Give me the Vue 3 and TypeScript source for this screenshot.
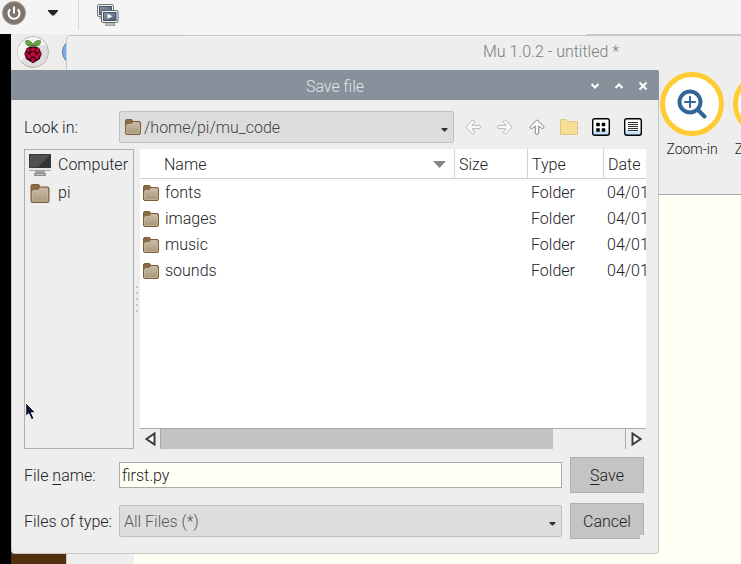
<script setup lang="ts">
import { ref } from 'vue'

interface Entry {
  name: string
  type: string
  date: string
}

const entries: Entry[] = [
  { name: 'fonts', type: 'Folder', date: '04/01' },
  { name: 'images', type: 'Folder', date: '04/01' },
  { name: 'music', type: 'Folder', date: '04/01' },
  { name: 'sounds', type: 'Folder', date: '04/01' },
]

// Drupelets of the raspberry logo: centre x, centre y, radius
const drupelets: [number, number, number][] = [
  [12, 10.6, 2.4], [7, 11.6, 2.3], [17, 11.6, 2.3],
  [4.6, 16, 1.9], [19.4, 16, 1.9], [12, 16.2, 2.8],
  [7.4, 19, 2.5], [16.6, 19, 2.5], [12, 23, 2.3],
]

const fileName = ref('first.py')
const lookIn = ref('/home/pi/mu_code')
const fileType = ref('All Files (*)')
</script>

<template>
  <div class="viewer">
    <svg class="defs" width="0" height="0" aria-hidden="true">
      <defs>
        <linearGradient id="tan" x1="0" y1="0" x2="0" y2="1">
          <stop offset="0" stop-color="#c9bda9" />
          <stop offset="1" stop-color="#a99878" />
        </linearGradient>
        <linearGradient id="glow" x1="0" y1="0" x2="0" y2="1">
          <stop offset="0.55" stop-color="#ffffff" />
          <stop offset="1" stop-color="#a9d2fb" />
        </linearGradient>
        <linearGradient id="screen" x1="0" y1="0" x2="1" y2="1">
          <stop offset="0" stop-color="#8b9bb0" />
          <stop offset="1" stop-color="#4d5d70" />
        </linearGradient>
        <symbol id="folder" viewBox="0 0 16 16">
          <path d="M.5 14V1.9Q.5.5 1.9.5h4.3Q7.500.5 7.500 2.500H14Q15.500 2.500 15.500 4v10Q15.500 15.500 14 15.500H2Q.5 15.500.5 14z" fill="#8a6c47" stroke="#7d5e34" />
          <path d="M1.500 14V7Q1.500 5.500 3 5.500h3.500L8 3.500h5.500q1 0 1 1V14q0 .5-.5.5H2q-.5 0-.5-.5z" fill="url(#tan)" stroke="#d0c4b0" stroke-width=".7" />
        </symbol>
        <symbol id="arrow" viewBox="0 0 16 16">
          <path d="M.8 8 7 1.500q1.500-1 2.500.3.500 1-.5 2L7 6.300h7q1.500.2 1.500 1.700T14 9.700H7l2 2.500q1 1 .5 2-1 1.300-2.500.3z" fill="#fafafa" stroke="currentColor" />
        </symbol>
        <symbol id="caret" viewBox="0 0 7 5">
          <path d="M.5 1h6v1L4 4.500H3L.5 2z" fill="#303236" />
        </symbol>
      </defs>
    </svg>

    <header class="viewer-bar">
      <button class="power" aria-label="Power">
        <svg width="24" height="24" viewBox="0 0 24 24">
          <circle cx="12" cy="12" r="11.500" fill="#7d756d" stroke="#a49e98" />
          <path d="M8.300 8.200a5.500 5.500 0 1 0 7.400 0M12 5.500v7" fill="none" stroke="#fff" stroke-width="2" />
        </svg>
      </button>
      <button class="more" aria-label="More">
        <svg width="10" height="6" viewBox="0 0 10 6"><path d="M0 0h10v1L6 5.500H4L0 1z" fill="#242424" /></svg>
      </button>
      <button class="screens" aria-label="Screens">
        <svg width="22" height="22" viewBox="0 0 22 22">
          <rect x=".5" y=".5" width="16" height="12" rx="1.500" fill="#f2f2f0" stroke="#777874" />
          <rect x="2.500" y="2.500" width="12" height="8" fill="url(#screen)" stroke="#45526a" />
          <path d="M3 12.500h3v2H2z" fill="#aaa" />
          <path d="M9 18h8l1 3.500H8.500z" fill="#bbb" stroke="#888" stroke-width=".7" />
          <rect x="4.500" y="6.500" width="16.500" height="12" rx="1.500" fill="#f5f5f3" stroke="#666762" />
          <rect x="6.500" y="8.500" width="12.500" height="8" fill="url(#screen)" stroke="#45526a" />
          <path d="M10.500 9.800v5l5-2.500z" fill="#fff" />
        </svg>
      </button>
    </header>

    <main class="desktop">
      <nav class="panel">
        <div class="launchers">
          <button class="launcher" aria-label="Menu">
            <svg width="34" height="34" viewBox="0 0 34 34">
              <circle cx="17" cy="17" r="15.500" fill="#dedede" stroke="#b4b4b4" />
              <path d="M1.500 17a15.500 15.500 0 0 1 29-7C20 8 12 18 5 26.500A15 15 0 0 1 1.500 17z" fill="#f5f5f5" />
              <g transform="translate(6.500 5) scale(.875)">
                <path d="M5 9Q12 5.500 19 9l3 7-2.500 6L12 26.500 4.500 22 2 16z" fill="#25000c" />
                <path d="M11.500 7Q3 7.500 3.500 1q3-1 5.500.5Q12 3 11.500 7zM12.500 7Q21 7.500 20.500 1q-3-1-5.500.5Q12 3 12.500 7z" fill="#75b346" stroke="#345e1e" stroke-width=".8" />
                <path d="m6 3 4.500 3.500M18 3l-4.500 3.500" stroke="#345e1e" stroke-width=".7" fill="none" />
                <circle v-for="(d, i) in drupelets" :key="i" :cx="d[0]" :cy="d[1]" :r="d[2]" fill="#c7053d" />
              </g>
            </svg>
          </button>
          <button class="launcher" aria-label="Web browser">
            <svg width="32" height="32" viewBox="0 0 32 32">
              <circle cx="16" cy="16" r="12.500" fill="#78aef0" stroke="#56779f" />
            </svg>
          </button>
        </div>
        <div class="tasks"></div>
      </nav>

      <section class="mu">
        <h1 class="mu-title">Mu 1.0.2 - untitled *</h1>
        <div class="mu-tools">
          <button class="tool">
            <span class="disc">
              <svg width="30" height="30" viewBox="0 0 30 30" fill="none" stroke="#336699" stroke-linecap="round">
                <circle cx="13" cy="13" r="10.500" stroke-width="4" />
                <path d="m21.500 21.500 6 6" stroke-width="4" />
                <path d="M8 13h10M13 8v10" stroke-width="2" />
              </svg>
            </span>
            Zoom-in
          </button>
          <button class="tool">
            <span class="disc"></span>
            Zoom-out
          </button>
        </div>
        <div class="editor"></div>
      </section>

      <form class="dialog" @submit.prevent>
        <header class="titlebar">
          <h2>Save file</h2>
          <div class="controls">
            <button type="button" aria-label="Minimise">
              <svg width="10" height="10" viewBox="0 0 10 10"><path d="m1.500 3 3.500 3.500L8.500 3" /></svg>
            </button>
            <button type="button" aria-label="Maximise">
              <svg width="10" height="10" viewBox="0 0 10 10"><path d="m1.500 7 3.500-3.500L8.500 7" /></svg>
            </button>
            <button type="button" aria-label="Close">
              <svg width="10" height="10" viewBox="0 0 10 10"><path d="m1.500 1.500 7 7M8.500 1.500l-7 7" /></svg>
            </button>
          </div>
        </header>

        <div class="content">
          <div class="look">
            <label for="look-in">Look in:</label>
            <div class="combo with-icon">
              <svg class="combo-icon" width="16" height="16"><use href="#folder" /></svg>
              <select id="look-in" v-model="lookIn"><option>/home/pi/mu_code</option></select>
              <svg class="combo-caret" width="7" height="5"><use href="#caret" /></svg>
            </div>
            <div class="nav">
              <button type="button" aria-label="Back" class="dim"><svg width="16" height="16"><use href="#arrow" /></svg></button>
              <button type="button" aria-label="Forward" class="dim right"><svg width="16" height="16"><use href="#arrow" /></svg></button>
              <button type="button" aria-label="Parent directory" class="up"><svg width="16" height="16"><use href="#arrow" /></svg></button>
              <button type="button" aria-label="Create new folder">
                <svg width="18" height="16" viewBox="0 0 18 16">
                  <path d="M.5 15.500V.5h6l2 2h9v13z" fill="#f6de93" stroke="#dfc68a" />
                </svg>
              </button>
              <button type="button" aria-label="List view">
                <svg width="18" height="18" viewBox="0 0 18 18">
                  <rect x=".7" y=".7" width="16.600" height="16.600" rx="2" fill="url(#glow)" stroke="#000" stroke-width="1.400" />
                  <path d="M4.500 5h3v3h-3zM10 5h3v3h-3zM4.500 10.500h3v3h-3zM10 10.500h3v3h-3z" fill="#000" stroke="#000" stroke-width=".5" />
                </svg>
              </button>
              <button type="button" aria-label="Detail view">
                <svg width="18" height="18" viewBox="0 0 18 18">
                  <rect x=".7" y=".7" width="16.600" height="16.600" rx="2" fill="url(#glow)" stroke="#000" stroke-width="1.400" />
                  <path d="M4 4.500h10M4 6.500h10M4 8.500h10M4 10.500h10M4 12.500h10" stroke="#333" />
                </svg>
              </button>
            </div>
          </div>

          <div class="browser">
            <ul class="places">
              <li>
                <svg width="22" height="22" viewBox="0 0 22 22">
                  <path d="M0 0h22v17H0z" fill="#e6e6e6" />
                  <path d="M0 0h22v14H0z" fill="#4f4f4f" />
                  <path d="M22 0v14H8z" fill="#343434" />
                  <path d="M.5.5h21v13H.5z" fill="none" stroke="#393939" />
                  <path d="M0 16.500h22" stroke="#aaa" />
                  <path d="M7 17h8v2H7zM5.500 19.500h11v2h-11z" fill="#c7c7c7" stroke="#888" />
                </svg>
                Computer
              </li>
              <li>
                <svg class="big" width="20" height="19"><use href="#folder" width="20" height="19" /></svg>
                pi
              </li>
            </ul>
            <div class="splitter"><i v-for="n in 5" :key="n"></i></div>
            <div class="listing">
              <div class="table-clip">
                <table>
                  <thead>
                    <tr>
                      <th class="name">
                        <div class="sort">Name
                          <svg width="13" height="7" viewBox="0 0 13 7"><path d="M0 0h13L6.500 7z" fill="#868686" /></svg>
                        </div>
                      </th>
                      <th class="size">Size</th>
                      <th class="type">Type</th>
                      <th class="date">Date</th>
                    </tr>
                  </thead>
                  <tbody>
                    <tr v-for="e in entries" :key="e.name">
                      <td>
                        <div class="file"><svg width="16" height="16"><use href="#folder" /></svg>{{ e.name }}</div>
                      </td>
                      <td></td>
                      <td>{{ e.type }}</td>
                      <td>{{ e.date }}</td>
                    </tr>
                  </tbody>
                </table>
              </div>
              <div class="scroll">
                <button type="button" aria-label="Scroll left">
                  <svg width="11" height="14" viewBox="0 0 11 14"><path d="M9.500 1.500v11L1.500 7z" /></svg>
                </button>
                <div class="track"><div class="thumb"></div></div>
                <button type="button" aria-label="Scroll right">
                  <svg width="11" height="14" viewBox="0 0 11 14"><path d="M1.500 1.500v11l8-5.500z" /></svg>
                </button>
              </div>
            </div>
          </div>

          <div class="fields">
            <label for="file-name">File <u>n</u>ame:</label>
            <input id="file-name" v-model="fileName" type="text" />
            <button class="action" type="submit"><u>S</u>ave</button>
            <label for="file-type">Files of type:</label>
            <div class="combo">
              <select id="file-type" v-model="fileType"><option>All Files (*)</option></select>
              <svg class="combo-caret" width="7" height="5"><use href="#caret" /></svg>
            </div>
            <button class="action notched" type="button">Cancel</button>
          </div>
        </div>
      </form>

      <svg class="pointer" width="13" height="19" viewBox="0 0 13 19" aria-hidden="true">
        <path d="M.7.7v13.800l3-2.800 2.800 6 2.600-1.200-2.700-5.700h4.300z" fill="#0d1030" stroke="#fff" />
      </svg>
    </main>
  </div>
</template>

<style>
body {
  margin: 0;
  overflow: hidden;
}
</style>

<style scoped>
.viewer {
  display: flex;
  flex-direction: column;
  height: 100vh;
  background: #000;
  color: #202225;
  font: 300 16px/20px Roboto, sans-serif;
}
.viewer * {
  box-sizing: border-box;
}
.defs {
  position: absolute;
}
svg {
  display: block;
  flex: none;
}
button {
  display: flex;
  align-items: center;
  justify-content: center;
  margin: 0;
  padding: 0;
  border: 0;
  background: none;
  color: inherit;
  font: inherit;
}
h1,
h2 {
  margin: 0;
  font: inherit;
}
u {
  text-decoration-thickness: 1px;
  text-underline-offset: 3px;
}
.viewer-bar {
  display: flex;
  flex: none;
  height: 34px;
  padding: 0 2px 8px;
  background: #f5f5f5;
}
.more {
  width: 53px;
  margin-right: -1px;
}
.screens {
  height: 30px;
  padding-left: 18px;
  border-left: 1px solid #d8d8d8;
}
.desktop {
  position: relative;
  flex: 1;
  margin-left: 11px;
  overflow: hidden;
  background: #52300f;
}
.panel {
  display: flex;
  justify-content: space-between;
  height: 36px;
  background: #f5f5f5;
}
.launchers {
  display: flex;
  align-items: center;
  gap: 9px;
  width: 173px;
  padding-left: 5px;
  background: #edecea;
}
.tasks {
  width: 155px;
  background: #c8c8c8;
}
.mu {
  display: flex;
  position: absolute;
  top: 1px;
  bottom: -1px;
  left: 55px;
  flex-direction: column;
  width: 970px;
  border: 1px solid #c8c8c8;
  border-radius: 4px 0 0;
  background: #eee;
}
.mu-title {
  height: 32px;
  color: #7b7d80;
  line-height: 32px;
  text-align: center;
}
.mu-tools {
  display: flex;
  gap: 9px;
  height: 127px;
  padding: 4px 0 0 593px;
  border-bottom: 1px solid #aaa;
}
.tool {
  flex-direction: column;
  flex: none;
  justify-content: flex-start;
  gap: 3px;
  width: 64px;
  font-size: 14px;
}
.disc {
  display: flex;
  align-items: center;
  justify-content: center;
  width: 64px;
  height: 64px;
  border: 5px solid #fc3;
  border-radius: 50%;
  background: #fff;
}
.editor {
  flex: 1;
  margin-left: 67px;
  background: #fffff5;
}
.dialog {
  position: absolute;
  top: 36px;
  right: 82px;
  left: 0;
  border: 1px solid #c6c6c6;
  border-top: 0;
  border-radius: 2px 2px 4px 4px;
  background: #eee;
}
.titlebar {
  display: grid;
  grid-template-columns: 1fr auto 1fr;
  align-items: center;
  height: 30px;
  margin: 0 -1px;
  padding: 0 8px;
  border-radius: 2px 2px 0 0;
  background: #87919b;
  color: #e3e6e9;
}
.titlebar h2 {
  grid-column: 2;
  padding-top: 2px;
}
.controls {
  display: flex;
  gap: 8px;
  justify-self: end;
}
.controls button {
  width: 16px;
  height: 32px;
}
.controls path {
  fill: none;
  stroke: #fff;
  stroke-width: 2;
}
.content {
  padding: 11px 12px 14px;
}
label {
  padding-top: 2px;
  white-space: nowrap;
}
.look {
  display: grid;
  grid-template-columns: 95px 1fr auto;
  align-items: center;
}
.combo {
  display: flex;
  position: relative;
  min-width: 0;
}
select {
  width: 100%;
  height: 32px;
  padding: 2px 20px 0 4px;
  border: 1px solid #c0c0c0;
  border-radius: 2px;
  outline: 0;
  appearance: none;
  background: #ddd;
  color: #55585c;
  font: inherit;
}
.with-icon select {
  padding-left: 24px;
  color: #404347;
}
.combo-icon {
  position: absolute;
  top: 8px;
  left: 6px;
}
.combo-caret {
  position: absolute;
  right: 6px;
  bottom: 11px;
}
.nav {
  display: flex;
  gap: 8px;
  padding: 0 1px 0 7px;
}
.nav button {
  width: 24px;
  height: 24px;
  color: #888;
}
.nav .dim {
  color: #b8b8b8;
}
.right svg {
  transform: rotate(180deg);
}
.up svg {
  transform: rotate(90deg);
}
.browser {
  display: flex;
  height: 300px;
  margin-top: 6px;
}
.places {
  width: 110px;
  flex: none;
  margin: 0;
  padding: 1px 4px;
  border: 1px solid #b0b0b0;
  list-style: none;
}
.places li {
  display: flex;
  align-items: center;
  gap: 7px;
  height: 28px;
}
.big {
  margin: 0 1px;
}
.splitter {
  display: flex;
  flex-direction: column;
  align-items: center;
  justify-content: center;
  flex: none;
  gap: 4px;
  width: 6px;
}
.splitter i {
  width: 2px;
  height: 2px;
  background: #c4c4c4;
}
.listing {
  display: flex;
  flex: 1;
  flex-direction: column;
  min-width: 0;
}
.table-clip {
  flex: 1;
  overflow: hidden;
  background: #fff;
}
table {
  width: 100%;
  border-spacing: 0;
  table-layout: fixed;
}
th,
td {
  padding: 2px 0 0 4px;
  font-weight: 300;
  text-align: left;
  white-space: nowrap;
}
th {
  height: 30px;
  border-bottom: 1px solid #ccc;
}
th + th {
  border-left: 1px solid #d4d4d4;
}
td {
  height: 26px;
}
td:first-child {
  padding-left: 3px;
}
.size {
  width: 73px;
}
.type {
  width: 76px;
}
.date {
  width: 43px;
}
.sort {
  display: flex;
  align-items: center;
  justify-content: space-between;
  padding: 0 8px 0 20px;
}
.file {
  display: flex;
  align-items: center;
  gap: 6px;
}
.scroll {
  display: flex;
  height: 21px;
  border-top: 1px solid #aaa;
}
.scroll button {
  width: 20px;
}
.scroll button:last-child {
  width: 21px;
  border-left: 1px solid #aaa;
}
.scroll path {
  fill: #fff;
  stroke: #3c3e42;
  stroke-width: 2;
}
.track {
  display: grid;
  flex: 1;
  grid-template-columns: 11fr 2fr;
}
.thumb {
  border-left: 1px solid #aaa;
  background: #c3c3c3;
}
.fields {
  display: grid;
  grid-template-columns: 95px 1fr 74px;
  align-items: center;
  row-gap: 10px;
  margin: 8px 2px 0 0;
}
input {
  width: 100%;
  min-width: 0;
  height: 26px;
  padding: 0 2px;
  border: 1px solid #aaa;
  outline: 0;
  background: #fffff5;
  color: inherit;
  font: inherit;
}
.fields input,
.fields .combo {
  width: auto;
  margin-right: 8px;
}
.action {
  display: block;
  position: relative;
  height: 36px;
  padding-top: 2px;
  border: 1px solid #b0b0b0;
  background: #c4c4c4;
}
.notched::after {
  position: absolute;
  right: -1px;
  bottom: -1px;
  width: 4px;
  height: 4px;
  background: #eee;
  content: '';
}
.pointer {
  position: absolute;
  top: 368px;
  left: 14px;
}
</style>
